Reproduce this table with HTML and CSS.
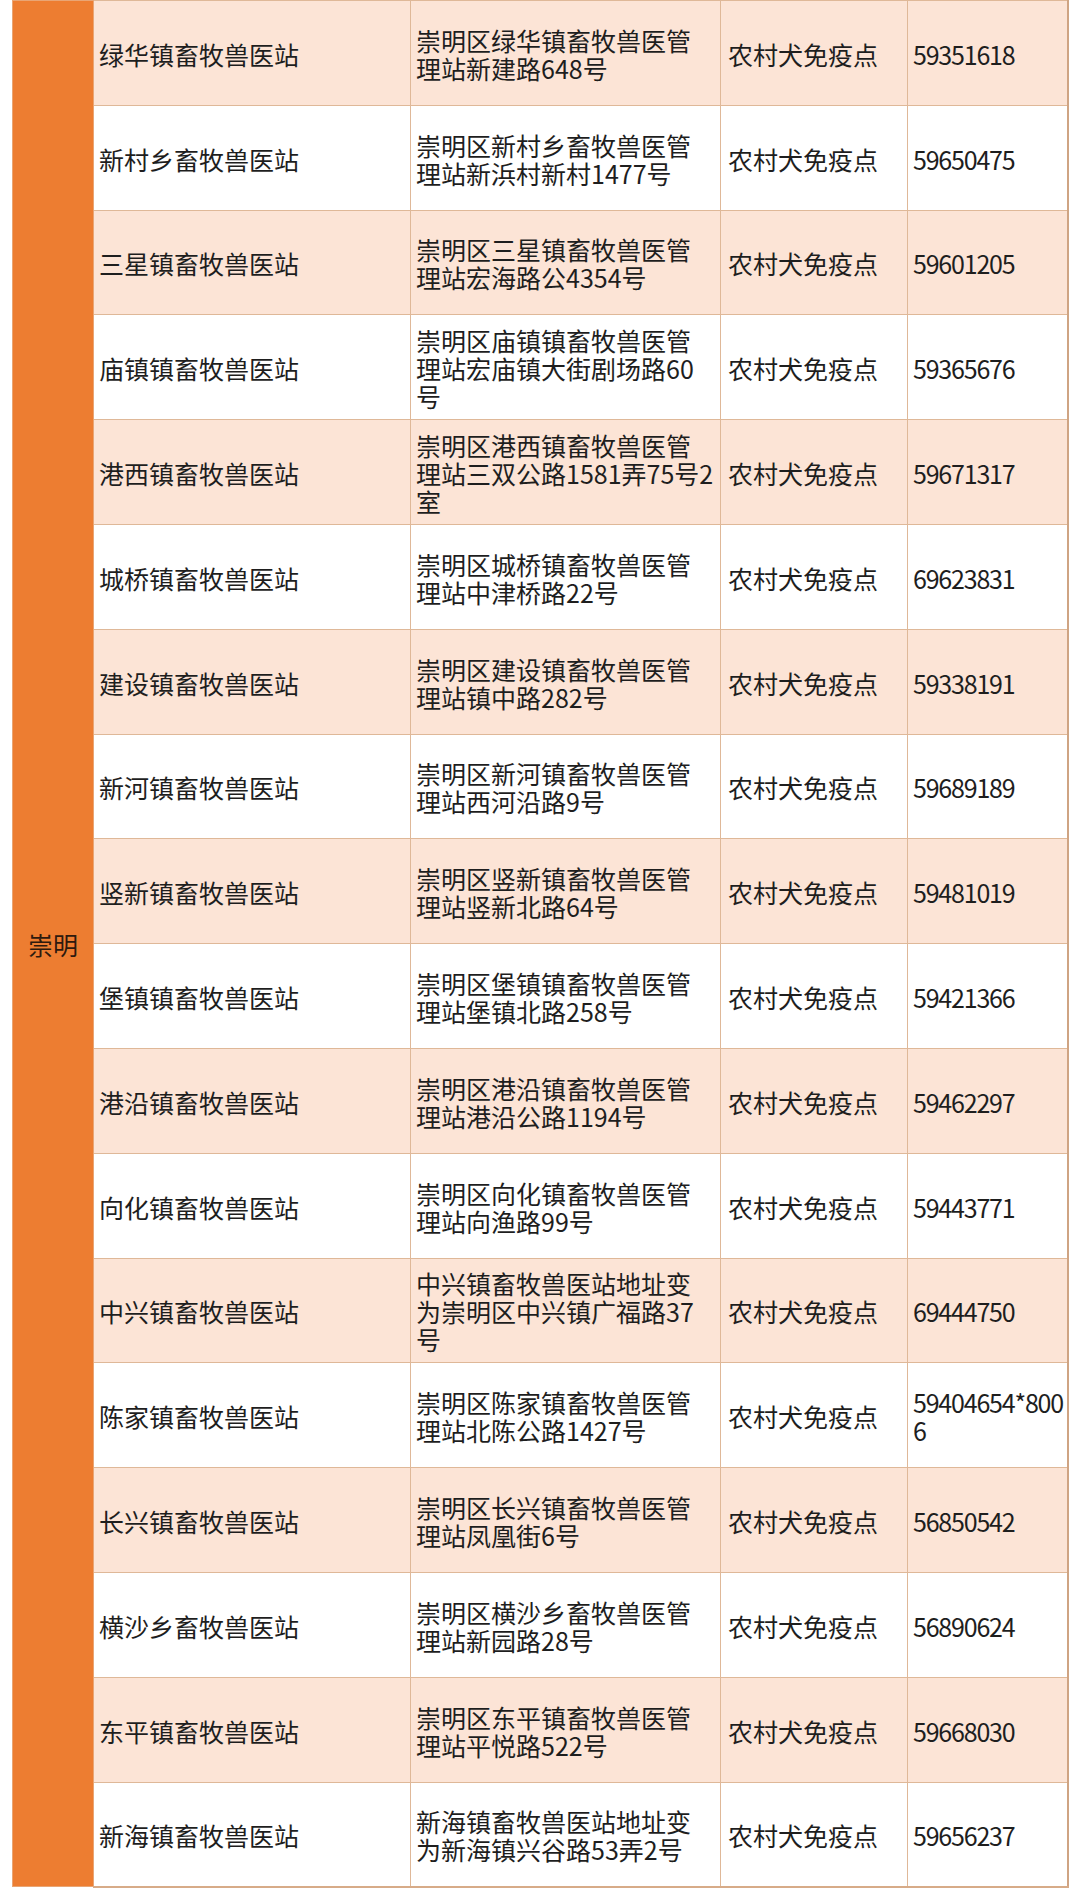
FILE: index.html
```html
<!DOCTYPE html>
<html lang="zh-CN">
<head>
<meta charset="utf-8">
<title>崇明 农村犬免疫点</title>
<link rel="stylesheet" href="styles.css">
</head>
<body>
<div class="page">
<table class="sites">
<colgroup>
<col class="c-district"><col class="c-name"><col class="c-addr"><col class="c-type"><col class="c-tel">
</colgroup>
<tbody>
<tr class="shade"><td class="district" rowspan="18">崇明</td><td>绿华镇畜牧兽医站</td><td>崇明区绿华镇畜牧兽医管<br>理站新建路648号</td><td class="type">农村犬免疫点</td><td class="tel">59351618</td></tr>
<tr><td>新村乡畜牧兽医站</td><td>崇明区新村乡畜牧兽医管<br>理站新浜村新村1477号</td><td class="type">农村犬免疫点</td><td class="tel">59650475</td></tr>
<tr class="shade"><td>三星镇畜牧兽医站</td><td>崇明区三星镇畜牧兽医管<br>理站宏海路公4354号</td><td class="type">农村犬免疫点</td><td class="tel">59601205</td></tr>
<tr><td>庙镇镇畜牧兽医站</td><td>崇明区庙镇镇畜牧兽医管<br>理站宏庙镇大街剧场路60<br>号</td><td class="type">农村犬免疫点</td><td class="tel">59365676</td></tr>
<tr class="shade"><td>港西镇畜牧兽医站</td><td>崇明区港西镇畜牧兽医管<br>理站三双公路1581弄75号2<br>室</td><td class="type">农村犬免疫点</td><td class="tel">59671317</td></tr>
<tr><td>城桥镇畜牧兽医站</td><td>崇明区城桥镇畜牧兽医管<br>理站中津桥路22号</td><td class="type">农村犬免疫点</td><td class="tel">69623831</td></tr>
<tr class="shade"><td>建设镇畜牧兽医站</td><td>崇明区建设镇畜牧兽医管<br>理站镇中路282号</td><td class="type">农村犬免疫点</td><td class="tel">59338191</td></tr>
<tr><td>新河镇畜牧兽医站</td><td>崇明区新河镇畜牧兽医管<br>理站西河沿路9号</td><td class="type">农村犬免疫点</td><td class="tel">59689189</td></tr>
<tr class="shade"><td>竖新镇畜牧兽医站</td><td>崇明区竖新镇畜牧兽医管<br>理站竖新北路64号</td><td class="type">农村犬免疫点</td><td class="tel">59481019</td></tr>
<tr><td>堡镇镇畜牧兽医站</td><td>崇明区堡镇镇畜牧兽医管<br>理站堡镇北路258号</td><td class="type">农村犬免疫点</td><td class="tel">59421366</td></tr>
<tr class="shade"><td>港沿镇畜牧兽医站</td><td>崇明区港沿镇畜牧兽医管<br>理站港沿公路1194号</td><td class="type">农村犬免疫点</td><td class="tel">59462297</td></tr>
<tr><td>向化镇畜牧兽医站</td><td>崇明区向化镇畜牧兽医管<br>理站向渔路99号</td><td class="type">农村犬免疫点</td><td class="tel">59443771</td></tr>
<tr class="shade"><td>中兴镇畜牧兽医站</td><td>中兴镇畜牧兽医站地址变<br>为崇明区中兴镇广福路37<br>号</td><td class="type">农村犬免疫点</td><td class="tel">69444750</td></tr>
<tr><td>陈家镇畜牧兽医站</td><td>崇明区陈家镇畜牧兽医管<br>理站北陈公路1427号</td><td class="type">农村犬免疫点</td><td class="tel">59404654*800<br>6</td></tr>
<tr class="shade"><td>长兴镇畜牧兽医站</td><td>崇明区长兴镇畜牧兽医管<br>理站凤凰街6号</td><td class="type">农村犬免疫点</td><td class="tel">56850542</td></tr>
<tr><td>横沙乡畜牧兽医站</td><td>崇明区横沙乡畜牧兽医管<br>理站新园路28号</td><td class="type">农村犬免疫点</td><td class="tel">56890624</td></tr>
<tr class="shade"><td>东平镇畜牧兽医站</td><td>崇明区东平镇畜牧兽医管<br>理站平悦路522号</td><td class="type">农村犬免疫点</td><td class="tel">59668030</td></tr>
<tr><td>新海镇畜牧兽医站</td><td>新海镇畜牧兽医站地址变<br>为新海镇兴谷路53弄2号</td><td class="type">农村犬免疫点</td><td class="tel">59656237</td></tr>
</tbody>
</table>
</div>
</body>
</html>
```
FILE: styles.css
```css
html, body {
  margin: 0;
  padding: 0;
  background: #ffffff;
}

.page {
  padding: 0 10px 0 12px;
}

.sites {
  border-collapse: collapse;
  table-layout: fixed;
  width: 1055px;
  font-family: "Noto Sans CJK SC", "Noto Sans", sans-serif;
  font-size: 25px;
  line-height: 28px;
  color: #1e1e1e;
}

.c-district { width: 81px; }
.c-name { width: 317px; }
.c-addr { width: 310px; }
.c-type { width: 187px; }
.c-tel { width: 160px; }

.sites td {
  height: 104.8px;
  padding: 2px 4px 0 5px;
  border: 1px solid #dfb898;
  vertical-align: middle;
  text-align: left;
  box-sizing: border-box;
}

.sites tr {
  background: #ffffff;
}

.sites tr.shade {
  background: #fce4d6;
}

.sites td.district {
  background: #ed7d31;
  color: #2e1a0e;
  text-align: center;
  padding: 0;
  border-color: #e9a574;
}

.sites td.type {
  padding-left: 7px;
}

.sites td.tel {
  letter-spacing: -1.2px;
}

.sites td:last-child {
  border-right: 2px solid #cfa483;
}

.sites tr:last-child td {
  border-bottom: 2px solid #d7ab88;
}
```
